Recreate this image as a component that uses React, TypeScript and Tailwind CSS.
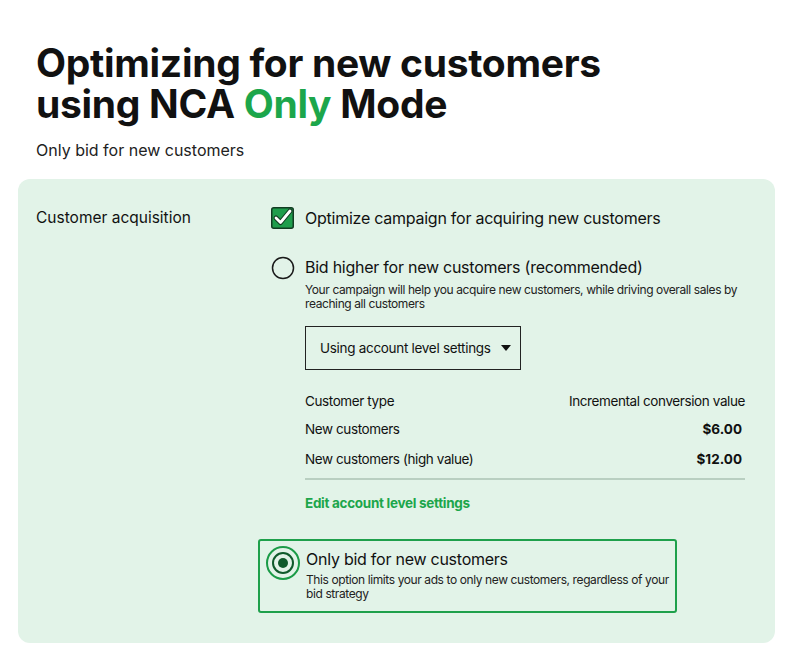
import React from 'react';

const Checkbox: React.FC = () => (
  <svg width="23" height="22" viewBox="0 0 23 22" className="shrink-0">
    <rect x="0.75" y="0.75" width="21.5" height="20.5" rx="2" fill="#1f9d4c" stroke="#123c22" strokeWidth="1.5" />
    <path d="M5 11 L9.5 15.5 L19 4" fill="none" stroke="#123c22" strokeWidth="5" strokeLinecap="round" strokeLinejoin="round" />
    <path d="M5 11 L9.5 15.5 L19 4" fill="none" stroke="#ffffff" strokeWidth="2.8" strokeLinecap="round" strokeLinejoin="round" />
  </svg>
);

const Radio: React.FC<{ checked?: boolean }> = ({ checked }) =>
  checked ? (
    <svg width="36" height="36" viewBox="0 0 36 36" className="shrink-0">
      <circle cx="18" cy="18" r="16" fill="none" stroke="#1b9b47" strokeWidth="2" />
      <circle cx="18" cy="18" r="10" fill="none" stroke="#0f5a2b" strokeWidth="2" />
      <circle cx="18" cy="18" r="5" fill="#0f5a2b" />
    </svg>
  ) : (
    <svg width="24" height="24" viewBox="0 0 24 24" className="shrink-0">
      <circle cx="12" cy="12" r="10.5" fill="none" stroke="#1a1a1a" strokeWidth="1.5" />
    </svg>
  );

const rows = [
  { type: 'New customers', value: '$6.00' },
  { type: 'New customers (high value)', value: '$12.00' },
];

export default function App() {
  return (
    <div className="w-[800px] h-[670px] bg-white text-[#111] font-['Inter','Liberation_Sans',sans-serif] overflow-hidden">
      <div className="px-9 pt-[42px]">
        <h1 className="text-[39px] leading-[41px] font-bold tracking-[-0.3px]">
          <div>Optimizing for new customers</div>
          <div>
            using NCA <span className="text-[#1ca64b]">Only</span> Mode
          </div>
        </h1>
        <p className="mt-[16px] text-[16px] leading-[20px] text-[#222]">Only bid for new customers</p>
      </div>

      <div className="ml-[18px] mt-[19px] w-[757px] h-[464px] rounded-xl bg-[#e2f3e8] flex pt-[28px]">
        <div className="w-[253px] pl-[18px] text-[15.5px] leading-[20px] pt-[1px]">Customer acquisition</div>

        <div className="flex flex-col">
          <div className="flex items-center gap-[11px]">
            <Checkbox />
            <span className="text-[16px] leading-[20px] tracking-[-0.25px]">Optimize campaign for acquiring new customers</span>
          </div>

          <div className="flex gap-[10px] mt-[27px]">
            <div>
              <Radio />
            </div>
            <div className="flex flex-col">
              <span className="text-[16px] leading-[22px] tracking-[-0.25px]">Bid higher for new customers (recommended)</span>
              <span className="text-[12px] leading-[14px] tracking-[-0.4px] text-[#222] w-[445px] mt-[5px]">
                Your campaign will help you acquire new customers, while driving overall sales by reaching all customers
              </span>

              <div className="mt-[15px] w-[216px] h-[44px] border border-[#222] flex items-center pl-[14px] gap-[9px] text-[13.5px] tracking-[-0.3px] whitespace-nowrap">
                Using account level settings
                <svg width="12" height="8" viewBox="0 0 12 8">
                  <path d="M1 1 L11 1 L6 7 Z" fill="#111" />
                </svg>
              </div>

              <div className="mt-[22px] w-[440px] text-[13.5px] leading-[18px] tracking-[-0.4px]">
                <div className="flex justify-between">
                  <span>Customer type</span>
                  <span>Incremental conversion value</span>
                </div>
                {rows.map((r, i) => (
                  <div key={r.type} className={i === 0 ? 'flex justify-between mt-[10px]' : 'flex justify-between mt-[12px]'}>
                    <span>{r.type}</span>
                    <span className="font-bold pr-[3px] tracking-[0px]">{r.value}</span>
                  </div>
                ))}
                <div className="mt-[10px] h-[2px] bg-[#b9cfc1]" />
                <div className="mt-[14px] font-bold text-[#1ca64b] tracking-[-0.3px]">Edit account level settings</div>
              </div>
            </div>
          </div>

          <div className="mt-[27px] -ml-[13px] w-[419px] h-[74px] border-2 border-[#1ea04b] rounded-[3px] flex gap-[5px] pl-[5px] pt-[4px]">
            <Radio checked />
            <div className="flex flex-col pt-[5px]">
              <span className="text-[16px] leading-[18px] tracking-[-0.25px]">Only bid for new customers</span>
              <span className="text-[12px] leading-[14px] tracking-[-0.4px] text-[#222] mt-[5px] w-[372px]">
                This option limits your ads to only new customers, regardless of your bid strategy
              </span>
            </div>
          </div>
        </div>
      </div>
    </div>
  );
}
